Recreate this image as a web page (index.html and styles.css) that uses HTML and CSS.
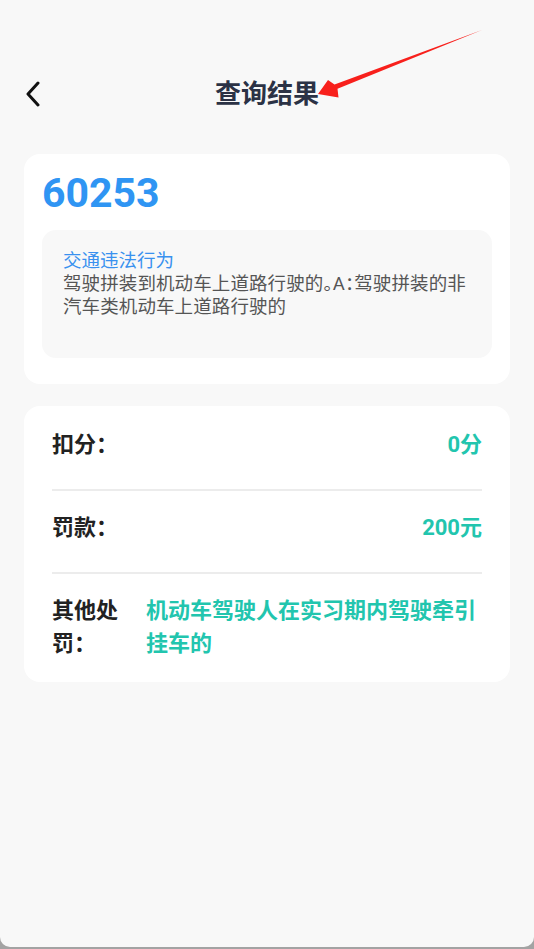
FILE: index.html
```html
<!DOCTYPE html>
<html lang="zh-CN">
  <head>
    <meta charset="UTF-8" />
    <meta name="viewport" content="width=device-width, initial-scale=1.0" />
    <title>查询结果</title>
    <link rel="stylesheet" href="styles.css">
  </head>
  <body>
    <div class="screen">
      <div class="header">
        <span class="back">
          <svg width="18" height="26" viewBox="0 0 18 26">
            <path d="M14 2 L4 13 L14 24" fill="none" stroke="#111" stroke-width="3" stroke-linecap="round" stroke-linejoin="round" />
          </svg>
        </span>
        <h1>查询结果</h1>
      </div>

      <div class="card">
        <p class="code">60253</p>
        <div class="behavior">
          <p class="behavior-title">交通违法行为</p>
          <p class="behavior-text">驾驶拼装到机动车上道路行驶的。A：驾驶拼装的非汽车类机动车上道路行驶的</p>
        </div>
      </div>

      <div class="card result">
        <div class="row">
          <span class="label">扣分：</span>
          <span class="value right">0分</span>
        </div>
        <div class="row">
          <span class="label">罚款：</span>
          <span class="value right">200元</span>
        </div>
        <div class="row last">
          <span class="label">其他处罚：</span>
          <span class="value">机动车驾驶人在实习期内驾驶牵引挂车的</span>
        </div>
      </div>

      <!-- red annotation arrow over the title -->
      <svg class="arrow" width="534" height="120" viewBox="0 0 534 120">
        <polygon points="318,94 328,80 334.5,84.6 482,30 337.5,88.8 338.5,97.5" fill="#f8201c" />
      </svg>
    </div>
  </body>
</html>
```

FILE: styles.css
```css
* {
  margin: 0;
  padding: 0;
  box-sizing: border-box;
}
html {
  background: #a3a3a3;
}
body {
  font-family: Roboto, "Noto Sans CJK SC", sans-serif;
  height: 949px;
}
.screen {
  position: relative;
  height: 947px;
  background: #f8f8f8;
  border-radius: 0 0 10px 10px;
  padding: 0 24px;
  display: flex;
  flex-direction: column;
}

.header {
  height: 48px;
  margin-top: 70px;
  margin-bottom: 36px;
  display: flex;
  align-items: center;
  justify-content: center;
  position: relative;
}
.back {
  position: absolute;
  left: 0;
  top: 11px;
  width: 18px;
  height: 26px;
}
h1 {
  font-size: 26px;
  font-weight: bold;
  color: #2b3245;
  line-height: 48px;
}

.card {
  background: #fff;
  border-radius: 16px;
  padding: 19px 18px 26px;
  margin-bottom: 22px;
}
.code {
  font-size: 41px;
  font-weight: bold;
  line-height: 1;
  color: #2f95f3;
  margin-bottom: 16px;
}
.behavior {
  background: #f8f8f8;
  border-radius: 14px;
  padding: 20px 21px 39px;
  line-height: 23px;
  font-size: 18.5px;
}
.behavior-title {
  color: #3991ef;
}
.behavior-text {
  color: #555;
  font-feature-settings: "halt";
  letter-spacing: 0.1px;
}

.result {
  padding: 2px 28px 0;
}
.row {
  display: flex;
  padding: 20px 0 28px;
  border-bottom: 2px solid #ececec;
  font-size: 22px;
  font-weight: bold;
  line-height: 33px;
}
.row.last {
  border-bottom: none;
  padding-bottom: 22px;
}
.label {
  width: 80px;
  flex-shrink: 0;
  color: #222;
}
.value {
  color: #22c5ae;
  margin-left: 14px;
  flex: 1;
}
.value.right {
  text-align: right;
}

.arrow {
  position: absolute;
  left: 0;
  top: 0;
  pointer-events: none;
}
```
